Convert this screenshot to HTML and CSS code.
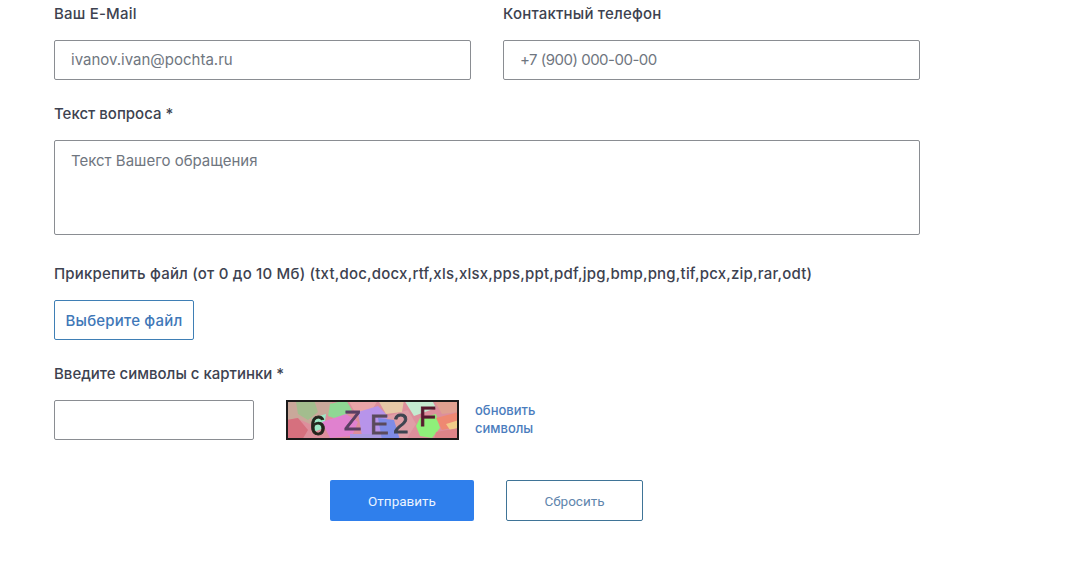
FILE: index.html
```html
<!DOCTYPE html>
<html lang="ru">
<head>
<meta charset="utf-8">
<title>Форма</title>
<link rel="stylesheet" href="styles.css">
</head>
<body>
<form class="form">
  <div class="two">
    <div class="field">
      <label class="label">Ваш E-Mail</label>
      <div class="input"><span class="ph">ivanov.ivan@pochta.ru</span></div>
    </div>
    <div class="field">
      <label class="label">Контактный телефон</label>
      <div class="input"><span class="ph phone">+7 (900) 000-00-00</span></div>
    </div>
  </div>
  <div class="field">
    <label class="label tight">Текст вопроса *</label>
    <div class="textarea"><span class="ph">Текст Вашего обращения</span></div>
  </div>
  <div class="field">
    <label class="label">Прикрепить файл (от 0 до 10 Мб) (txt,doc,docx,rtf,xls,xlsx,pps,ppt,pdf,jpg,bmp,png,tif,pcx,zip,rar,odt)</label>
    <div class="file">Выберите файл</div>
  </div>
  <div class="field">
    <label class="label tight">Введите символы с картинки *</label>
    <div class="captcha-row">
      <div class="input short"></div>
      <svg class="captcha" viewBox="0 0 173 40" width="173" height="40">
        <rect width="173" height="40" fill="#dd8f9c"/>
        <path d="M0 0H46V12L34 18L24 24L10 18L0 22Z" fill="#c9a89a"/>
        <path d="M10 2L28 0L32 12L22 20L12 14Z" fill="#a3bd8e"/>
        <path d="M0 20L12 18L22 30L16 40H0Z" fill="#d6707e"/>
        <path d="M26 18L40 14L38 28L28 32Z" fill="#9ee8c6"/>
        <path d="M44 4L60 0L66 10L54 20L42 16Z" fill="#8fd894"/>
        <path d="M36 22L60 14L72 22L66 36L44 38Z" fill="#e081cf"/>
        <path d="M62 0H92L86 10L70 14Z" fill="#e9a5a8"/>
        <path d="M72 12L92 6L104 18L96 32L76 36Z" fill="#b794ea"/>
        <path d="M92 0H118L116 12L100 14Z" fill="#e6c8a6"/>
        <path d="M102 16L122 10L130 24L120 40H92Z" fill="#df9ea6"/>
        <path d="M118 0H146L150 8L128 16Z" fill="#c4ead0"/>
        <path d="M64 34H112V40H64Z" fill="#a99ae0"/>
        <path d="M92 18L108 20L114 40H96Z" fill="#7f8ce6"/>
        <path d="M148 0H173V12L156 14Z" fill="#dfa090"/>
        <path d="M134 18L150 14L154 28L146 38L134 36L130 26Z" fill="#8ff07a"/>
        <path d="M150 18L173 12V26L156 30Z" fill="#ee8872"/>
        <path d="M160 24L173 20V28L164 30Z" fill="#f2cc88"/>
        <path d="M150 32L173 28V40H148Z" fill="#dd8488"/>
        <rect x="1" y="1" width="171" height="38" fill="none" stroke="#1a1a1a" stroke-width="2"/>
        <text class="cap-char" x="24" y="35" fill="#24241c" stroke="#24241c">6</text>
        <text class="cap-char" x="58" y="30" fill="#5a3f63" stroke="#5a3f63">Z</text>
        <text class="cap-char" x="84" y="34" fill="#5a4a5c" stroke="#5a4a5c">E</text>
        <text class="cap-char" x="107" y="33" fill="#3e4450" stroke="#3e4450">2</text>
        <text class="cap-char" x="133" y="26" fill="#561a2e" stroke="#561a2e">F</text>
      </svg>
      <a class="refresh" href="#">обновить<br>символы</a>
    </div>
  </div>
  <div class="actions">
    <button type="button" class="btn primary">Отправить</button>
    <button type="button" class="btn secondary">Сбросить</button>
  </div>
</form>
</body>
</html>
```
FILE: styles.css
```css
* { box-sizing: border-box; }
html, body { margin: 0; padding: 0; background: #fff; }
body { font-family: Inter, "Noto Sans", sans-serif; color: #3d4250; overflow: hidden; }
.form { width: 920px; padding: 4px 0 0 54px; display: flex; flex-direction: column; }
.two { display: grid; grid-template-columns: 417px 417px; column-gap: 32px; }
.field { display: flex; flex-direction: column; margin-bottom: 24px; }
.label { height: 20px; line-height: 20px; font-size: 15px; font-weight: 500; letter-spacing: 0.2px; margin-bottom: 16px; white-space: nowrap; }
.tight { letter-spacing: 0; }
.input { height: 40px; border: 1px solid #8a8d92; border-radius: 2px; padding: 0 16px 2px; display: flex; align-items: center; }
.short { width: 200px; }
.textarea { height: 95px; border: 1px solid #8a8d92; border-radius: 2px; padding: 9px 16px; line-height: 20px; margin-bottom: 5px; }
.ph { font-size: 15px; color: #6f7680; }
.phone { letter-spacing: -0.5px; }
.file { width: 140px; height: 40px; border: 1px solid #3f7fb5; border-radius: 2px; display: flex; align-items: center; justify-content: center; color: #3f78b8; font-size: 15px; font-weight: 500; letter-spacing: 0.2px; }
.captcha-row { display: flex; align-items: flex-start; }
.captcha { margin-left: 32px; display: block; filter: blur(0.4px); }
.cap-char { font-family: "Liberation Sans", sans-serif; font-size: 28px; stroke-width: 0.8px; }
.refresh { margin: 1px 0 0 16px; font-size: 13px; line-height: 18px; font-weight: 500; color: #4a7cbd; text-decoration: none; }
.actions { display: flex; padding-left: 276px; gap: 32px; margin-top: 16px; }
.btn { height: 41px; border-radius: 2px; font-family: Roboto, sans-serif; font-size: 13.5px; padding: 0; }
.primary { width: 144px; background: #2f7fec; border: 0; color: #eaf3ff; }
.secondary { width: 137px; background: #fff; border: 1px solid #3f7497; color: #5f86ad; }
```
